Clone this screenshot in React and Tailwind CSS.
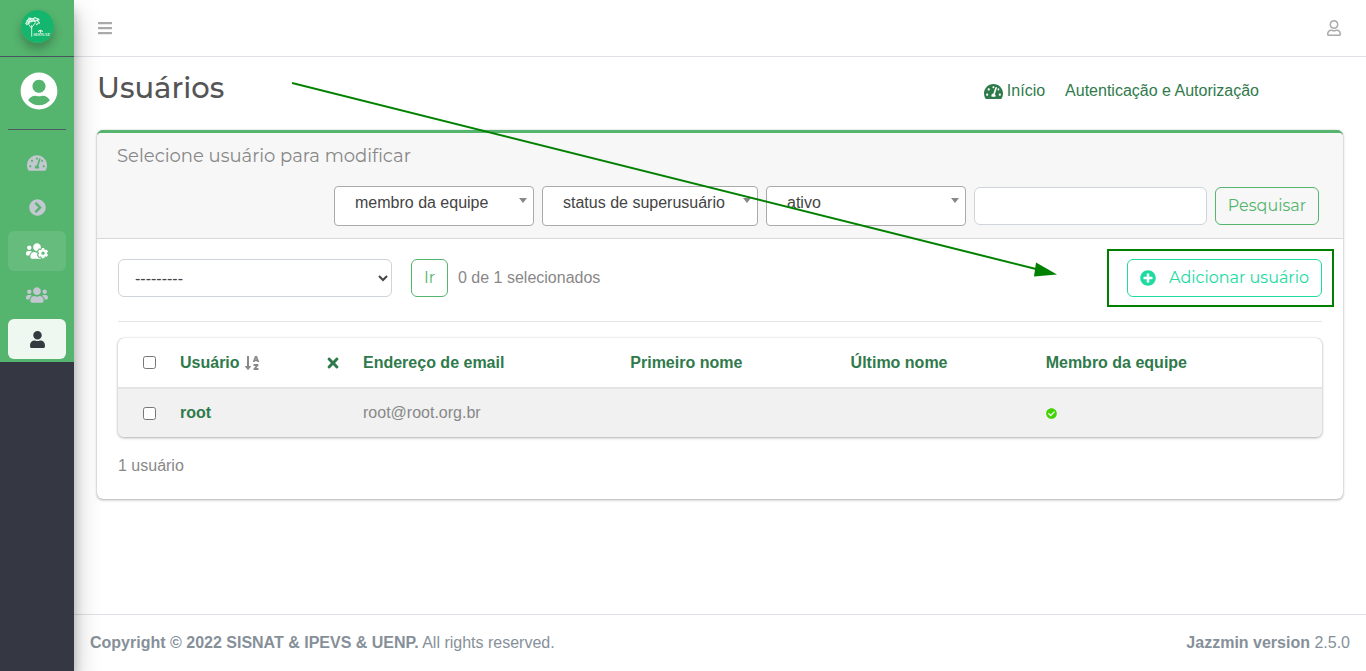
import React from "react";
import {
  FaBars,
  FaCheckCircle,
  FaChevronCircleRight,
  FaPlusCircle,
  FaRegUser,
  FaSortAlphaDown,
  FaTachometerAlt,
  FaTimes,
  FaUser,
  FaUserCircle,
  FaUsers,
  FaUsersCog,
} from "react-icons/fa";

function Logo() {
  return (
    <svg viewBox="0 0 34 34" className="size-[33px] rounded-full shadow-[0_6px_10px_rgba(0,0,0,0.25)]" aria-hidden="true">
      <circle cx="17" cy="17" r="17" fill="#14b56c" />
      <g fill="none" stroke="#d9f5e5" strokeLinecap="round" strokeLinejoin="round">
        <path d="M11 27V16M11 19l-3-4M11 18l4-5" strokeWidth="1" />
        <path
          d="M5 14l2-3 1 2 2-4 1 3 2-3 1 3 3-2M6 11l3-2M8 8.500l4 .5 3-1M14 8l3 1M6 15l3-2M10 12l4-1M17 11l2 2.500M17.500 9l1 1M16 15l1.500-1"
          strokeWidth="1.300"
        />
        <path d="M18 22q2-2 4 0M20 21.500v2" strokeWidth="1.200" />
      </g>
      <text x="12.500" y="27" fontSize="5" fontWeight="700" fill="#e4f8ec" fontFamily="Liberation Serif, serif">
        SISNAT
      </text>
    </svg>
  );
}

function NavItem({ icon: Icon, label, size = "size-5", className = "text-[#c2c7d0]" }) {
  return (
    <a href="#" aria-label={label} className={`flex h-10 items-center justify-center rounded-md ${className}`}>
      <Icon className={size} />
    </a>
  );
}

function Sidebar() {
  return (
    <aside className="relative z-10 w-[74px] shrink-0 bg-[#353842] shadow-[0_14px_28px_rgba(0,0,0,0.25),0_10px_10px_rgba(0,0,0,0.22)]">
      <div className="bg-[#55b46e] pb-[3px]">
        <a href="#" aria-label="SISNAT" className="flex h-[57px] items-start justify-center border-b border-[#4b545c] pt-[10px]">
          <Logo />
        </a>
        <div className="mx-2 mb-[13px] flex h-[73px] justify-center border-b border-[#4f5962] pt-[15px] pl-1">
          <FaUserCircle className="size-[38px] text-white" />
        </div>
        <nav className="mx-2 flex flex-col gap-1">
          <NavItem icon={FaTachometerAlt} label="Painel" />
          <NavItem icon={FaChevronCircleRight} label="Administração" size="size-[17px]" />
          <NavItem icon={FaUsersCog} label="Autenticação e Autorização" size="size-[22px]" className="bg-white/10 text-white" />
          <NavItem icon={FaUsers} label="Grupos" size="size-[22px]" />
          <NavItem icon={FaUser} label="Usuários" size="size-[17px]" className="bg-white/90 text-[#343a40]" />
        </nav>
      </div>
    </aside>
  );
}

function FilterSelect({ label, className }) {
  return (
    <div className={`relative ${className}`}>
      <select
        aria-label={label}
        className="h-10 w-full appearance-none rounded border border-[#aaa] bg-white px-5 pb-[7px] text-base text-[#444]"
      >
        <option>{label}</option>
      </select>
      <span className="pointer-events-none absolute top-3 right-[7px] border-x-4 border-t-[5px] border-x-transparent border-t-[#888]" />
    </div>
  );
}

function Filters() {
  return (
    <form className="mt-[18px] mr-1 flex items-center justify-end gap-2" onSubmit={(e) => e.preventDefault()}>
      <FilterSelect label="membro da equipe" className="w-[200px]" />
      <FilterSelect label="status de superusuário" className="w-[216px]" />
      <FilterSelect label="ativo" className="w-[200px]" />
      <input aria-label="Pesquisar" type="text" className="h-[38px] w-[233px] rounded-md border border-[#ced4da] bg-white px-3" />
      <button className="h-[38px] w-[104px] rounded-md border border-[#55b46e] font-[Montserrat,Inter,sans-serif] text-base text-[#55b46e]">
        Pesquisar
      </button>
    </form>
  );
}

function UsersTable() {
  return (
    <div className="overflow-hidden rounded-md shadow-[0_0_1px_rgba(0,0,0,0.3),0_1px_3px_rgba(0,0,0,0.3)]">
      <table className="w-full table-fixed border-collapse text-left">
        <colgroup>
          <col className="w-[50px]" />
          <col className="w-[15.200%]" />
          <col className="w-[22.200%]" />
          <col className="w-[18.300%]" />
          <col className="w-[16.200%]" />
          <col />
        </colgroup>
        <thead>
          <tr className="h-[50px] border-b-2 border-[#e4e4e4] text-[#2f7a4b]">
            <th className="pl-[25px]">
              <input type="checkbox" aria-label="Selecionar todos" className="block size-[13px]" />
            </th>
            <th className="px-3">
              <div className="flex items-center justify-between">
                <a href="#" className="flex items-center gap-1">
                  Usuário
                  <FaSortAlphaDown className="size-4 text-[#888]" />
                </a>
                <button aria-label="Remover ordenação" className="-mr-0.5">
                  <FaTimes className="size-4" />
                </button>
              </div>
            </th>
            <th className="px-3"><a href="#">Endereço de email</a></th>
            <th className="px-3"><a href="#">Primeiro nome</a></th>
            <th className="px-3"><a href="#">Último nome</a></th>
            <th className="px-3"><a href="#">Membro da equipe</a></th>
          </tr>
        </thead>
        <tbody>
          <tr className="h-[49px] bg-[#f1f1f1]">
            <td className="pl-[25px]">
              <input type="checkbox" aria-label="Selecionar root" className="block size-[13px]" />
            </td>
            <th className="px-3 text-[#2f7a4b]"><a href="#">root</a></th>
            <td className="px-3">root@root.org.br</td>
            <td />
            <td />
            <td className="px-3"><FaCheckCircle aria-label="Sim" className="size-[11px] text-[#41d400]" /></td>
          </tr>
        </tbody>
      </table>
    </div>
  );
}

function Card() {
  return (
    <section className="rounded-md border-t-[3px] border-[#55b46e] bg-white shadow-[0_0_1px_rgba(0,0,0,0.3),0_1px_3px_rgba(0,0,0,0.3)]">
      <header className="rounded-t border-b border-[#d8d8d8] bg-[#f7f7f7] px-5 pt-3 pb-3">
        <h2 className="font-[Montserrat,Inter,sans-serif] text-lg leading-[23px]">Selecione usuário para modificar</h2>
        <Filters />
      </header>
      <div className="px-[21px] pt-5 pb-[21px]">
        <div className="flex items-center border-b border-[#e5e5e5] pb-6">
          <select aria-label="Ação" className="h-[38px] w-[274px] rounded-md border border-[#ced4da] bg-white px-3 text-base text-[#444]">
            <option>---------</option>
          </select>
          <button className="ml-[19px] h-[38px] w-[37px] rounded-md border border-[#55b46e] font-[Montserrat,Inter,sans-serif] text-base text-[#55b46e]">
            Ir
          </button>
          <span className="ml-[10px]">0 de 1 selecionados</span>
          <div className="relative ml-auto">
            <a
              href="#"
              className="flex h-[38px] w-[195px] items-center justify-between rounded-md border border-[#20dba1] px-3 font-[Montserrat,Inter,sans-serif] text-base whitespace-nowrap text-[#20dba1]"
            >
              <FaPlusCircle className="size-4" />
              Adicionar usuário
            </a>
            <span className="pointer-events-none absolute -inset-y-2.5 -right-3 -left-5 border-2 border-[#008000]" />
          </div>
        </div>
        <div className="pt-4">
          <UsersTable />
          <p className="pt-[17px]">1 usuário</p>
        </div>
      </div>
    </section>
  );
}

function PointerArrow() {
  return (
    <svg className="pointer-events-none absolute top-[82px] left-[218px] z-20" width="766" height="196" viewBox="0 0 766 196" aria-hidden="true">
      <path d="M0 1L744 187" stroke="#008000" strokeWidth="2" />
      <path d="M765 192.500L744 180.500L742 194.500Z" fill="#008000" />
    </svg>
  );
}

export default function App() {
  return (
    <div className="flex min-h-screen bg-white font-['Liberation_Sans',Arial,sans-serif] text-base text-[#888]">
      <Sidebar />
      <div className="relative flex min-w-0 flex-1 flex-col">
        <header className="flex h-[57px] items-center justify-between border-b border-[#dee2e6] pr-6 pl-[23px] text-[#aaa]">
          <button aria-label="Menu"><FaBars className="size-4" /></button>
          <button aria-label="Conta"><FaRegUser className="size-4" /></button>
        </header>
        <main className="flex-1 px-[23px] pb-6">
          <div className="flex h-[73px] items-start justify-between pt-[14px]">
            <h1 className="font-[Montserrat,Inter,sans-serif] text-[29px] leading-[34px] font-medium text-[#555]">Usuários</h1>
            <nav aria-label="Trilha" className="mr-[84px] flex gap-5 pt-2 text-[#2f7a4b]">
              <a href="#" className="flex items-center gap-1">
                <FaTachometerAlt className="size-[19px]" />
                Início
              </a>
              <a href="#">Autenticação e Autorização</a>
            </nav>
          </div>
          <Card />
        </main>
        <footer className="flex h-[57px] items-center justify-between border-t border-[#dee2e6] px-4 text-[#869099]">
          <p><strong>Copyright © 2022 SISNAT &amp; IPEVS &amp; UENP.</strong> All rights reserved.</p>
          <p><strong>Jazzmin version</strong> 2.5.0</p>
        </footer>
        <PointerArrow />
      </div>
    </div>
  );
}
